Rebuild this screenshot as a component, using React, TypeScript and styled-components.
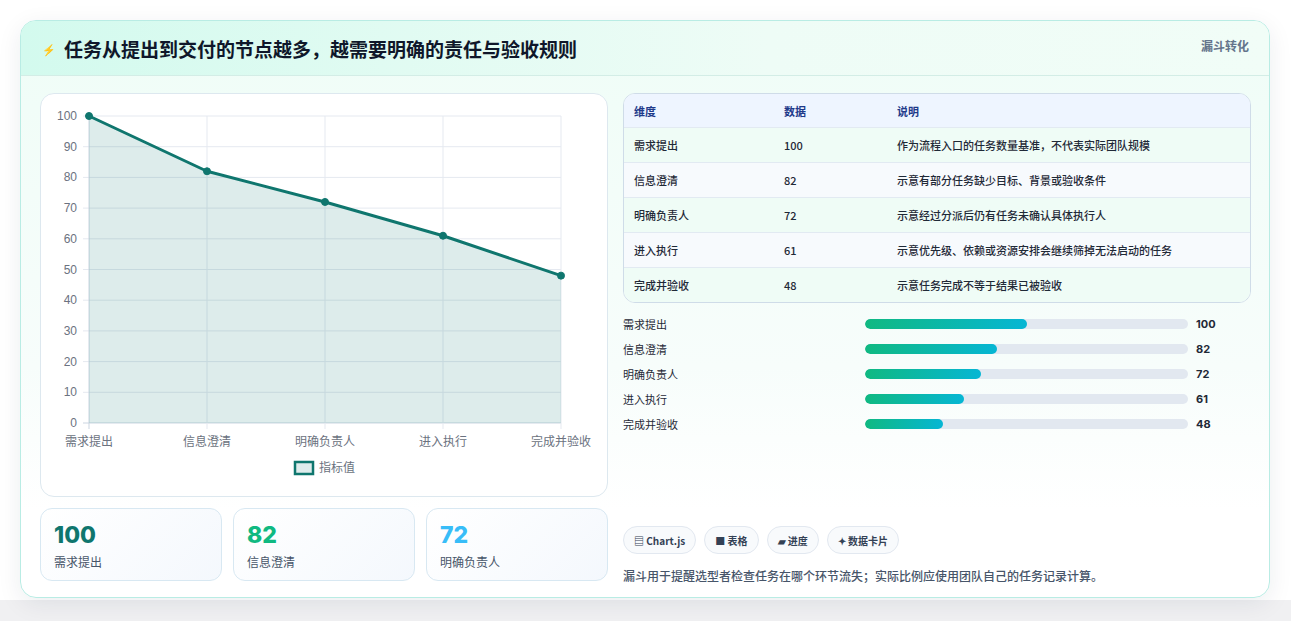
import React from "react";
import styled, { createGlobalStyle } from "styled-components";

const Global = createGlobalStyle`
  html, body { margin: 0; padding: 0; background: #f3f4f6; }
  body { font-family: "Noto Sans CJK SC", "Noto Sans", sans-serif; }
  * { box-sizing: border-box; }
`;

const Page = styled.div`
  width: 1291px; height: 621px; padding: 20px 21px 23px 20px; background: #ffffff;
  background: linear-gradient(#fff 0, #fff 600px, #f0f0f2 600px);
`;
const Card = styled.div`
  height: 578px; border: 1px solid #b9ece4; border-radius: 16px; overflow: hidden;
  background: linear-gradient(180deg, #effdf7 0%, #f7fdfb 60%, #ffffff 85%);
  box-shadow: 0 6px 24px rgba(15, 40, 60, 0.08);
  display: flex; flex-direction: column;
`;
const Header = styled.div`
  height: 55px; flex: none; display: flex; justify-content: space-between; align-items: flex-start;
  padding: 0 20px 0 21px; background: linear-gradient(90deg, #d3faee, #eefcf6 60%, #f1fdf7);
  border-bottom: 1px solid #d3ede6;
`;
const Title = styled.h1`
  margin: 14px 0 0; font-size: 19px; font-weight: 700; color: #0f172a; display: flex; align-items: center; gap: 8px;
`;
const Bolt = styled.span` font-size: 11px; color: #3b6fe0; `;
const Tag = styled.span` margin-top: 16px; font-size: 12px; font-weight: 700; color: #64748b; `;
const Body = styled.div`
  display: grid; grid-template-columns: 568px 628px; gap: 15px; padding: 17px 18px 0 19px;
`;
const Col = styled.div` display: flex; flex-direction: column; `;
const ChartCard = styled.div`
  height: 404px; background: #fff; border: 1px solid #dde8ef; border-radius: 14px;
`;
const Stats = styled.div` display: grid; grid-template-columns: repeat(3, 1fr); gap: 11px; margin-top: 11px; `;
const Stat = styled.div`
  height: 73px; border: 1px solid #d8e8f2; border-radius: 12px; padding: 12px 13px;
  background: linear-gradient(135deg, #ffffff, #f4f8fd);
`;
const StatNum = styled.div<{ c: string }>` font-size: 23px; font-weight: 800; color: ${p => p.c}; line-height: 28px; font-family: "Inter", sans-serif; `;
const StatLbl = styled.div` font-size: 12px; color: #475569; margin-top: 4px; `;
const Table = styled.div` border: 1px solid #cfdce8; border-radius: 12px; overflow: hidden; background: #fff; `;
const Row = styled.div<{ head?: boolean; alt?: boolean }>`
  display: grid; grid-template-columns: 150px 113px 1fr; height: ${p => (p.head ? 33 : 35)}px; align-items: center;
  padding-left: 10px; font-size: 11px;
  background: ${p => (p.head ? "#eef5ff" : p.alt ? "#f7fafd" : "#effcf6")};
  border-top: ${p => (p.head ? "none" : "1px solid #e2eaf2")};
  color: ${p => (p.head ? "#1e3a8a" : "#1f2937")}; font-weight: ${p => (p.head ? 700 : 500)};
`;
const Bars = styled.div` display: flex; flex-direction: column; gap: 7px; margin-top: 12px; `;
const BarRow = styled.div` display: grid; grid-template-columns: 234px 323px 1fr; align-items: center; height: 18px; column-gap: 8px; `;
const BarLbl = styled.span` font-size: 11px; color: #1f2937; `;
const Track = styled.div` height: 10px; border-radius: 5px; background: #e2e8f0; overflow: hidden; `;
const Fill = styled.div` height: 100%; border-radius: 5px; background: linear-gradient(90deg, #10b981, #06b6d4); `;
const BarVal = styled.span` font-size: 11px; font-weight: 700; color: #1f2937; font-family: "Inter", sans-serif; `;
const Chips = styled.div` display: flex; gap: 8px; margin-top: 93px; `;
const Chip = styled.span`
  height: 28px; padding: 0 10px; border: 1px solid #e2e8f0; border-radius: 14px; background: #f8fafc;
  font-size: 10px; font-weight: 700; color: #334155; display: flex; align-items: center; gap: 3px;
`;
const Note = styled.p` margin: 13px 0 0; font-size: 12px; color: #475569; font-weight: 500; `;

const labels = ["需求提出", "信息澄清", "明确负责人", "进入执行", "完成并验收"];
const vals = [100, 82, 72, 61, 48];
const descs = [
  "作为流程入口的任务数量基准，不代表实际团队规模",
  "示意有部分任务缺少目标、背景或验收条件",
  "示意经过分派后仍有任务未确认具体执行人",
  "示意优先级、依赖或资源安排会继续筛掉无法启动的任务",
  "示意任务完成不等于结果已被验收",
];

function Chart() {
  const x0 = 48, x1 = 520, y0 = 22, y1 = 329;
  const xs = labels.map((_, i) => x0 + ((x1 - x0) * i) / 4);
  const ys = (v: number) => y1 - ((y1 - y0) * v) / 100;
  const pts = vals.map((v, i) => `${xs[i]},${ys(v)}`).join(" ");
  return (
    <svg width="566" height="402" style={{ display: "block" }}>
      {Array.from({ length: 11 }, (_, i) => {
        const y = ys(i * 10);
        return (
          <g key={i}>
            <line x1={x0 - 6} x2={x1} y1={y} y2={y} stroke={i === 0 ? "#cbd5e1" : "#e5e9f0"} />
            <text x={x0 - 12} y={y + 4} textAnchor="end" fontSize="12" fill="#6b7280" fontFamily="Liberation Sans, sans-serif">{i * 10}</text>
          </g>
        );
      })}
      {xs.map((x, i) => (
        <g key={i}>
          <line x1={x} x2={x} y1={y0} y2={y1 + 6} stroke={i === 0 ? "#cbd5e1" : "#e5e9f0"} />
          <text x={x} y={y1 + 23} textAnchor="middle" fontSize="12" fill="#6b7280" fontFamily="Noto Sans CJK SC, sans-serif">{labels[i]}</text>
        </g>
      ))}
      <polygon points={`${x0},${y1} ${pts} ${x1},${y1}`} fill="rgba(15,118,110,0.14)" />
      <polyline points={pts} fill="none" stroke="#0f766e" strokeWidth="3" strokeLinejoin="round" />
      {vals.map((v, i) => (
        <circle key={i} cx={xs[i]} cy={ys(v)} r="3.5" fill="#0f766e" stroke="#0f766e" />
      ))}
      <rect x="254" y="368" width="18" height="12" fill="#dfecec" stroke="#0f766e" strokeWidth="2.5" />
      <text x="278" y="378" fontSize="12" fill="#6b7280" fontFamily="Noto Sans CJK SC, sans-serif">指标值</text>
    </svg>
  );
}

export default function App() {
  return (
    <>
      <Global />
      <Page>
        <Card>
          <Header>
            <Title><Bolt>⚡</Bolt>任务从提出到交付的节点越多，越需要明确的责任与验收规则</Title>
            <Tag>漏斗转化</Tag>
          </Header>
          <Body>
            <Col>
              <ChartCard><Chart /></ChartCard>
              <Stats>
                <Stat><StatNum c="#0f766e">100</StatNum><StatLbl>需求提出</StatLbl></Stat>
                <Stat><StatNum c="#10b981">82</StatNum><StatLbl>信息澄清</StatLbl></Stat>
                <Stat><StatNum c="#38bdf8">72</StatNum><StatLbl>明确负责人</StatLbl></Stat>
              </Stats>
            </Col>
            <Col>
              <Table>
                <Row head><span>维度</span><span>数据</span><span>说明</span></Row>
                {labels.map((l, i) => (
                  <Row key={l} alt={i % 2 === 1}><span>{l}</span><span>{vals[i]}</span><span>{descs[i]}</span></Row>
                ))}
              </Table>
              <Bars>
                {labels.map((l, i) => (
                  <BarRow key={l}>
                    <BarLbl>{l}</BarLbl>
                    <Track><Fill style={{ width: `${vals[i] / 2}%` }} /></Track>
                    <BarVal>{vals[i]}</BarVal>
                  </BarRow>
                ))}
              </Bars>
              <Chips>
                <Chip>▤ Chart.js</Chip>
                <Chip>■ 表格</Chip>
                <Chip>▰ 进度</Chip>
                <Chip>✦ 数据卡片</Chip>
              </Chips>
              <Note>漏斗用于提醒选型者检查任务在哪个环节流失；实际比例应使用团队自己的任务记录计算。</Note>
            </Col>
          </Body>
        </Card>
      </Page>
    </>
  );
}
